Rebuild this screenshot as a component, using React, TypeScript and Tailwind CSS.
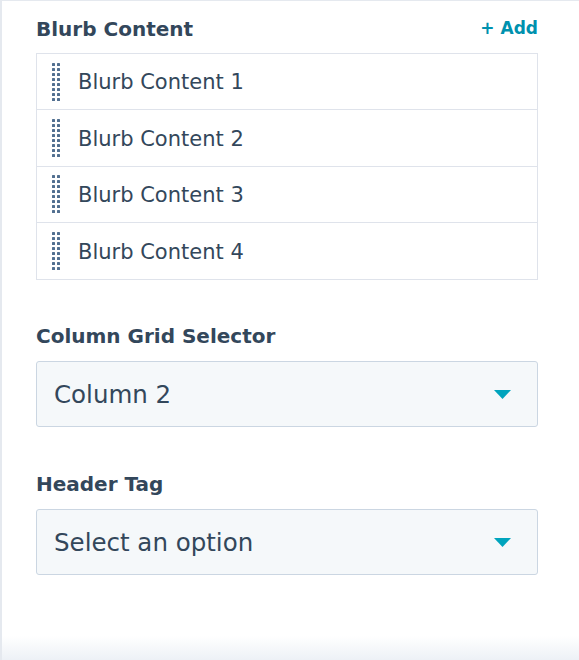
import React from "react";

function Handle() {
  const rows = [0, 1, 2, 3, 4, 5, 6, 7];
  return (
    <svg width="8" height="38" viewBox="0 0 8 38" className="shrink-0">
      {rows.map((r) => (
        <g key={r} fill="#516f90">
          <rect x="0" y={r * 5} width="3" height="3" rx="0.6" />
          <rect x="5" y={r * 5} width="3" height="3" rx="0.6" />
        </g>
      ))}
    </svg>
  );
}

function Caret() {
  return (
    <svg width="17" height="9" viewBox="0 0 17 9" className="shrink-0">
      <path d="M0 0 H17 L8.5 9 Z" fill="#00a4bd" />
    </svg>
  );
}

function Select({ value }: { value: string }) {
  return (
    <div className="flex h-[66px] items-center justify-between rounded-[3px] border border-[#cbd6e2] bg-[#f5f8fa] pl-[17px] pr-[26px]">
      <span className="pt-[2px] text-[24.5px] leading-none text-[#33475b]">{value}</span>
      <Caret />
    </div>
  );
}

export default function App() {
  const items = ["Blurb Content 1", "Blurb Content 2", "Blurb Content 3", "Blurb Content 4"];
  return (
    <div
      className="relative h-[660px] w-[579px] overflow-hidden border-l-2 border-t border-[#e5e9ef] bg-white"
      style={{ fontFamily: '"DejaVu Sans", "Open Sans", sans-serif' }}
    >
      <div className="pl-[34px] pr-[41px] pt-[15px]">
        <div className="flex h-[26px] items-center justify-between">
          <span className="text-[20px] font-bold text-[#33475b]">Blurb Content</span>
          <span className="text-[17px] font-bold text-[#0091ae]">+ Add</span>
        </div>
        <div className="mt-[11px] divide-y divide-[#dfe3eb] border border-[#dfe3eb]">
          {items.map((it) => (
            <div key={it} className="flex h-[56.25px] items-center pl-[15px]">
              <Handle />
              <span className="ml-[18px] pt-[3px] text-[21px] text-[#33475b]">{it}</span>
            </div>
          ))}
        </div>
        <div className="mt-[43px] flex h-[26px] items-center">
          <span className="text-[20px] font-bold text-[#33475b]">Column Grid Selector</span>
        </div>
        <div className="mt-[12px]">
          <Select value="Column 2" />
        </div>
        <div className="mt-[44px] flex h-[26px] items-center">
          <span className="text-[20px] font-bold text-[#33475b]">Header Tag</span>
        </div>
        <div className="mt-[12px]">
          <Select value="Select an option" />
        </div>
      </div>
      <div className="pointer-events-none absolute bottom-0 left-0 right-0 h-[24px] bg-gradient-to-b from-white to-[#edf1f6]" />
    </div>
  );
}
